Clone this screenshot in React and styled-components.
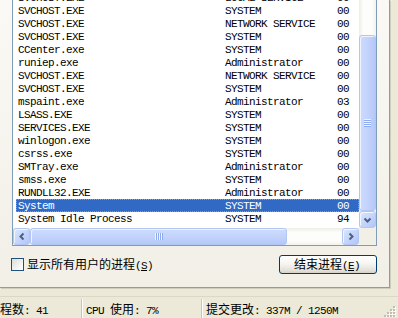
import React from 'react';
import styled, { createGlobalStyle } from 'styled-components';

const processes = [
  { name: 'SVCHOST.EXE', user: 'LOCAL SERVICE', cpu: '00' },
  { name: 'SVCHOST.EXE', user: 'SYSTEM', cpu: '00' },
  { name: 'SVCHOST.EXE', user: 'NETWORK SERVICE', cpu: '00' },
  { name: 'SVCHOST.EXE', user: 'SYSTEM', cpu: '00' },
  { name: 'CCenter.exe', user: 'SYSTEM', cpu: '00' },
  { name: 'runiep.exe', user: 'Administrator', cpu: '00' },
  { name: 'SVCHOST.EXE', user: 'NETWORK SERVICE', cpu: '00' },
  { name: 'SVCHOST.EXE', user: 'SYSTEM', cpu: '00' },
  { name: 'mspaint.exe', user: 'Administrator', cpu: '03' },
  { name: 'LSASS.EXE', user: 'SYSTEM', cpu: '00' },
  { name: 'SERVICES.EXE', user: 'SYSTEM', cpu: '00' },
  { name: 'winlogon.exe', user: 'SYSTEM', cpu: '00' },
  { name: 'csrss.exe', user: 'SYSTEM', cpu: '00' },
  { name: 'SMTray.exe', user: 'Administrator', cpu: '00' },
  { name: 'smss.exe', user: 'SYSTEM', cpu: '00' },
  { name: 'RUNDLL32.EXE', user: 'Administrator', cpu: '00' },
  { name: 'System', user: 'SYSTEM', cpu: '00', selected: true },
  { name: 'System Idle Process', user: 'SYSTEM', cpu: '94' },
];

const GlobalStyle = createGlobalStyle`
  html, body {
    margin: 0;
    padding: 0;
    background: #ece9d8;
  }
`;

const Window = styled.div`
  width: 398px;
  height: 318px;
  overflow: hidden;
  background: #ece9d8;
  display: flex;
  flex-direction: column;
  font-family: "Liberation Mono", "Noto Sans CJK SC", monospace;
  font-size: 11px;
  letter-spacing: -0.6px;
  color: #000;
`;

const TabPage = styled.div`
  width: 390px;
  height: 288px;
  flex-shrink: 0;
  box-sizing: border-box;
  padding: 0 12px 13px 12px;
  border-right: 1px solid #919b9c;
  border-bottom: 1px solid #919b9c;
  box-shadow: 1px 1px 0 #d0cdbf;
  background: linear-gradient(#faf9f5, #f1efe6);
  display: flex;
  flex-direction: column;
  justify-content: flex-end;
  gap: 9px;
`;

const ListView = styled.div`
  flex-shrink: 0;
  width: 365px;
  height: 300px;
  box-sizing: border-box;
  border: 1px solid #7f9db9;
  background: #fff;
  display: grid;
  grid-template-columns: 346px 17px;
  grid-template-rows: 1fr 17px;
`;

const Rows = styled.div`
  overflow: hidden;
  display: flex;
  flex-direction: column;
  justify-content: flex-end;
  padding-bottom: 3px;
`;

const Row = styled.div`
  flex-shrink: 0;
  height: 13px;
  margin-left: 3px;
  display: grid;
  grid-template-columns: 207px 112px 1fr;
  white-space: nowrap;
  background: ${({ $selected }) => ($selected ? '#316ac5' : 'transparent')};
  color: ${({ $selected }) => ($selected ? '#fff' : '#000')};
  outline: ${({ $selected }) => ($selected ? '1px dotted #ce953a' : 'none')};
  outline-offset: -1px;
`;

const Cell = styled.span`
  padding: 2px 0 0 2px;
  line-height: 11px;
  overflow: hidden;
`;

const VScroll = styled.div`
  display: flex;
  flex-direction: column;
  background: linear-gradient(90deg, #eeede5 0, #fdfdfb 25%, #fdfdfb 75%, #f3f2ec 100%);
`;

const HScroll = styled.div`
  display: flex;
  background: linear-gradient(180deg, #eeede5 0, #fdfdfb 25%, #fdfdfb 75%, #f3f2ec 100%);
`;

const Track = styled.div`
  flex: 1;
`;

const Thumb = styled.div`
  flex-shrink: 0;
  box-sizing: border-box;
  ${({ $vertical }) => ($vertical ? 'height: 176px; width: 17px;' : 'width: 257px; height: 17px;')}
  border: 1px solid #b2c6f4;
  border-radius: 3px;
  background: ${({ $vertical }) =>
    $vertical
      ? 'linear-gradient(90deg, #cddbfc 0%, #c3d3fc 50%, #b4c8f8 100%)'
      : 'linear-gradient(180deg, #cddbfc 0%, #c3d3fc 50%, #b4c8f8 100%)'};
  box-shadow: inset 1px 1px 0 #eef3fe;
  display: flex;
  align-items: center;
  justify-content: center;
`;

const Grip = styled.div`
  ${({ $vertical }) =>
    $vertical
      ? 'width: 7px; height: 8px; background: repeating-linear-gradient(180deg, #eef4fe 0 1px, #8cabf3 1px 2px);'
      : 'width: 8px; height: 7px; background: repeating-linear-gradient(90deg, #eef4fe 0 1px, #8cabf3 1px 2px);'}
`;

const ArrowButton = styled.div`
  flex-shrink: 0;
  width: 17px;
  height: 17px;
  box-sizing: border-box;
  border: 1px solid #b2c6f4;
  border-radius: 3px;
  background: linear-gradient(135deg, #dce6fd 0%, #c4d4fb 55%, #b1c5f7 100%);
  box-shadow: inset 1px 1px 0 #f2f6fe;
  display: flex;
  align-items: center;
  justify-content: center;
`;

const Corner = styled.div`
  background: #f1efe6;
`;

const Controls = styled.div`
  flex-shrink: 0;
  height: 19px;
  margin-left: -1px;
  display: flex;
  align-items: center;
  justify-content: space-between;
`;

const CheckLabel = styled.label`
  display: flex;
  align-items: center;
  gap: 3px;
  height: 13px;
`;

const CheckBox = styled.span`
  width: 13px;
  height: 13px;
  box-sizing: border-box;
  border: 1px solid #1c5180;
  background: linear-gradient(135deg, #dcdcd7 0%, #fbfbf9 80%, #fff 100%);
`;

const Cjk = styled.span`
  font-family: "Noto Sans CJK SC", sans-serif;
  font-size: 12px;
  letter-spacing: 0;
`;

const LabelText = styled.span`
  line-height: 13px;
  white-space: nowrap;
`;

const Button = styled.button`
  width: 98px;
  height: 19px;
  margin: 0;
  padding: 0 2px 0 0;
  box-sizing: border-box;
  border: 1px solid #003c74;
  border-radius: 3px;
  background: linear-gradient(180deg, #ffffff 0%, #f6f5f1 45%, #e3e1d9 85%, #d6d0c5 100%);
  font-family: inherit;
  font-size: 11px;
  letter-spacing: -0.6px;
  color: #000;
  line-height: 15px;
  white-space: nowrap;
`;

const StatusBar = styled.div`
  margin-top: 8px;
  flex: 1;
  display: flex;
  border-top: 1px solid #dcd8c7;
  margin-left: -16px;
`;

const Panel = styled.div`
  flex-shrink: 0;
  width: ${({ $width }) => $width};
  box-sizing: border-box;
  padding: 2px 0 0 4px;
  line-height: 16px;
  white-space: nowrap;
  border-right: ${({ $last }) => ($last ? 'none' : '1px solid #cbc6b4')};
  box-shadow: ${({ $last }) => ($last ? 'none' : '1px 0 0 #fff')};
  margin-top: 2px;
`;

const LastPanel = styled(Panel)`
  flex: 1;
`;

const SizeGrip = styled.svg`
  align-self: flex-end;
  flex-shrink: 0;
  margin: 0 2px 2px 0;
`;

const Chevron = ({ dir }) => {
  const paths = {
    down: 'M1.5 1.5 L4.5 4.5 L7.5 1.5',
    left: 'M4.5 1.5 L1.5 4.5 L4.5 7.5',
    right: 'M1.5 1.5 L4.5 4.5 L1.5 7.5',
    up: 'M1.5 4.5 L4.5 1.5 L7.5 4.5',
  };
  const vertical = dir === 'down' || dir === 'up';
  return (
    <svg width={vertical ? 9 : 6} height={vertical ? 6 : 9} viewBox={vertical ? '0 0 9 6' : '0 0 6 9'}>
      <path d={paths[dir]} fill="none" stroke="#4d6185" strokeWidth="2" />
    </svg>
  );
};

const gripDots = [
  [9, 1], [6, 4], [9, 4], [3, 7], [6, 7], [9, 7], [0, 10], [3, 10], [6, 10], [9, 10],
];

export default function App() {
  return (
    <>
      <GlobalStyle />
      <Window>
        <TabPage>
          <ListView>
            <Rows>
              {processes.map((p, i) => (
                <Row key={i} $selected={p.selected}>
                  <Cell>{p.name}</Cell>
                  <Cell>{p.user}</Cell>
                  <Cell>{p.cpu}</Cell>
                </Row>
              ))}
            </Rows>
            <VScroll>
              <ArrowButton><Chevron dir="up" /></ArrowButton>
              <Track />
              <Thumb $vertical><Grip $vertical /></Thumb>
              <ArrowButton><Chevron dir="down" /></ArrowButton>
            </VScroll>
            <HScroll>
              <ArrowButton><Chevron dir="left" /></ArrowButton>
              <Thumb><Grip /></Thumb>
              <Track />
              <ArrowButton><Chevron dir="right" /></ArrowButton>
            </HScroll>
            <Corner />
          </ListView>
          <Controls>
            <CheckLabel>
              <CheckBox />
              <LabelText>
                <Cjk>显示所有用户的进程</Cjk>(<u>S</u>)
              </LabelText>
            </CheckLabel>
            <Button>
              <Cjk>结束进程</Cjk>(<u>E</u>)
            </Button>
          </Controls>
        </TabPage>
        <StatusBar>
          <Panel $width="98px">
            <Cjk>进程数</Cjk>: 41
          </Panel>
          <Panel $width="120px">
            CPU <Cjk>使用</Cjk>: 7%
          </Panel>
          <LastPanel $last>
            <Cjk>提交更改</Cjk>: 337M / 1250M
          </LastPanel>
          <SizeGrip width="12" height="12" viewBox="0 0 12 12">
            {gripDots.map(([x, y], i) => (
              <g key={i}>
                <rect x={x + 1} y={y + 1} width="2" height="2" fill="#fff" />
                <rect x={x} y={y} width="2" height="2" fill="#c2bfb1" />
              </g>
            ))}
          </SizeGrip>
        </StatusBar>
      </Window>
    </>
  );
}
